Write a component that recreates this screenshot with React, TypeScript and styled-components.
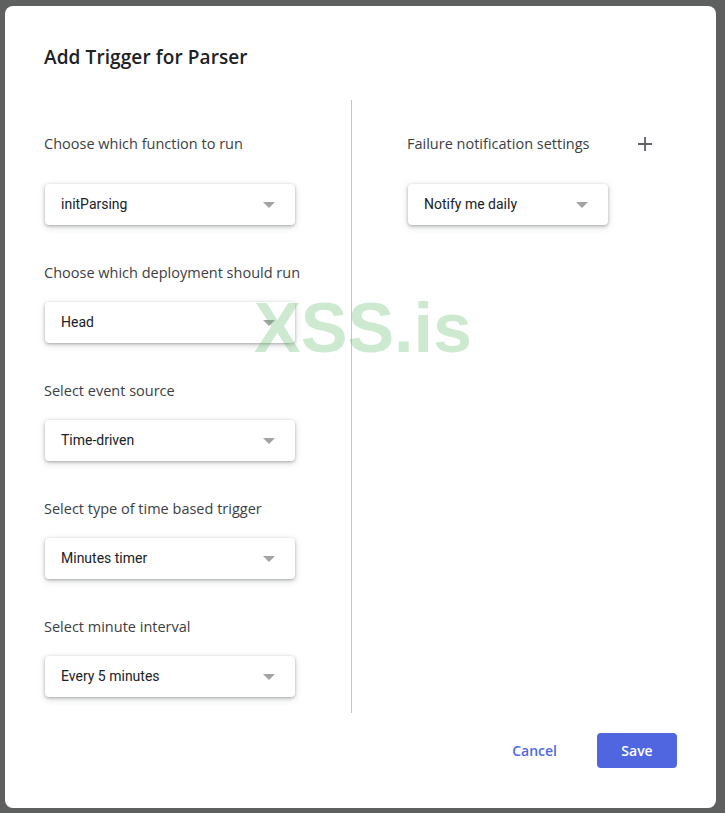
import React from 'react';
import styled, { createGlobalStyle } from 'styled-components';

const GlobalStyle = createGlobalStyle`
  html, body {
    margin: 0;
    padding: 0;
    background: #5e5f5f;
  }
  body {
    font-family: Roboto, "Liberation Sans", Arial, sans-serif;
  }
`;

interface Field {
  label: string;
  value: string;
}

const leftFields: Field[] = [
  { label: 'Choose which function to run', value: 'initParsing' },
  { label: 'Choose which deployment should run', value: 'Head' },
  { label: 'Select event source', value: 'Time-driven' },
  { label: 'Select type of time based trigger', value: 'Minutes timer' },
  { label: 'Select minute interval', value: 'Every 5 minutes' },
];

const Select: React.FC<{ value: string; width: number }> = ({ value, width }) => (
  <SelectBox $width={width}>
    <span>{value}</span>
    <Arrow />
  </SelectBox>
);

const App: React.FC = () => {
  return (
    <Page>
      <GlobalStyle />
      <Dialog>
        <Title>Add Trigger for Parser</Title>
        <Body>
          <Column>
            {leftFields.map((f, idx) => (
              <FieldBlock key={f.label} $first={idx === 0}>
                <Label>{f.label}</Label>
                <Select value={f.value} width={250} />
              </FieldBlock>
            ))}
          </Column>
          <Divider />
          <RightColumn>
            <FieldBlock $first>
              <LabelRow>
                <Label>Failure notification settings</Label>
                <PlusButton aria-label="Add">
                  <svg width="14" height="14" viewBox="0 0 14 14">
                    <path d="M7 0v14M0 7h14" stroke="#5f6368" strokeWidth="1.8" />
                  </svg>
                </PlusButton>
              </LabelRow>
              <Select value="Notify me daily" width={200} />
            </FieldBlock>
          </RightColumn>
        </Body>
        <Footer>
          <CancelButton>Cancel</CancelButton>
          <SaveButton>Save</SaveButton>
        </Footer>
        <Watermark>XSS.is</Watermark>
      </Dialog>
    </Page>
  );
};

export default App;

const Page = styled.div`
  padding: 6px 9px 5px 5px;
`;

const Dialog = styled.div`
  position: relative;
  width: 711px;
  height: 802px;
  background: #fff;
  border-radius: 8px;
  box-sizing: border-box;
  padding: 41px 39px 40px 39px;
  display: flex;
  flex-direction: column;
`;

const Title = styled.div`
  font-family: "Open Sans", Roboto, sans-serif;
  font-size: 19px;
  font-weight: 600;
  line-height: 20px;
  color: #202124;
  letter-spacing: 0.1px;
`;

const Body = styled.div`
  margin-top: 33px;
  display: flex;
  height: 613px;
`;

const Column = styled.div`
  width: 307px;
  display: flex;
  flex-direction: column;
`;

const RightColumn = styled.div`
  padding-left: 55px;
  display: flex;
  flex-direction: column;
`;

const Divider = styled.div`
  width: 1px;
  background: #c4c4c4;
`;

const FieldBlock = styled.div<{ $first?: boolean }>`
  display: flex;
  flex-direction: column;
  gap: ${(p) => (p.$first ? '30px' : '19px')};
  margin-top: ${(p) => (p.$first ? '34px' : '38px')};
`;

const LabelRow = styled.div`
  display: flex;
  align-items: center;
  width: 245px;
  justify-content: space-between;
`;

const Label = styled.div`
  font-family: "Open Sans", Roboto, sans-serif;
  font-size: 14.5px;
  line-height: 20px;
  color: #3c4043;
`;

const PlusButton = styled.div`
  display: flex;
  align-items: center;
  justify-content: center;
  width: 14px;
  height: 14px;
`;

const SelectBox = styled.div<{ $width: number }>`
  width: ${(p) => p.$width}px;
  height: 41px;
  margin-left: 1px;
  box-sizing: border-box;
  padding: 0 20px 2px 16px;
  display: flex;
  align-items: center;
  justify-content: space-between;
  background: #fff;
  border-radius: 4px;
  box-shadow: 0 1px 3px rgba(60, 64, 67, 0.35), 0 2px 7px rgba(60, 64, 67, 0.2);
  font-family: Roboto, "Liberation Sans", sans-serif;
  font-size: 14px;
  color: #202124;
`;

const Arrow = styled.div`
  width: 0;
  height: 0;
  margin-top: 2px;
  border-left: 6px solid transparent;
  border-right: 6px solid transparent;
  border-top: 6px solid #a3a3a3;
`;

const Footer = styled.div`
  margin-top: 20px;
  display: flex;
  justify-content: flex-end;
  gap: 24px;
`;

const CancelButton = styled.button`
  height: 35px;
  padding: 0 16px;
  border: none;
  background: transparent;
  font-family: "Open Sans", Roboto, sans-serif;
  font-size: 14px;
  font-weight: 600;
  color: #4e6ae0;
  cursor: pointer;
`;

const SaveButton = styled.button`
  width: 80px;
  height: 35px;
  border: none;
  border-radius: 4px;
  background: #5066e0;
  color: #fff;
  font-family: "Open Sans", Roboto, sans-serif;
  font-size: 14px;
  font-weight: 600;
  cursor: pointer;
`;

const Watermark = styled.div`
  position: absolute;
  left: 249px;
  top: 287px;
  font-family: "Liberation Sans", Arial, sans-serif;
  font-size: 70px;
  font-weight: 700;
  line-height: 1;
  color: rgba(90, 185, 100, 0.3);
  pointer-events: none;
`;
